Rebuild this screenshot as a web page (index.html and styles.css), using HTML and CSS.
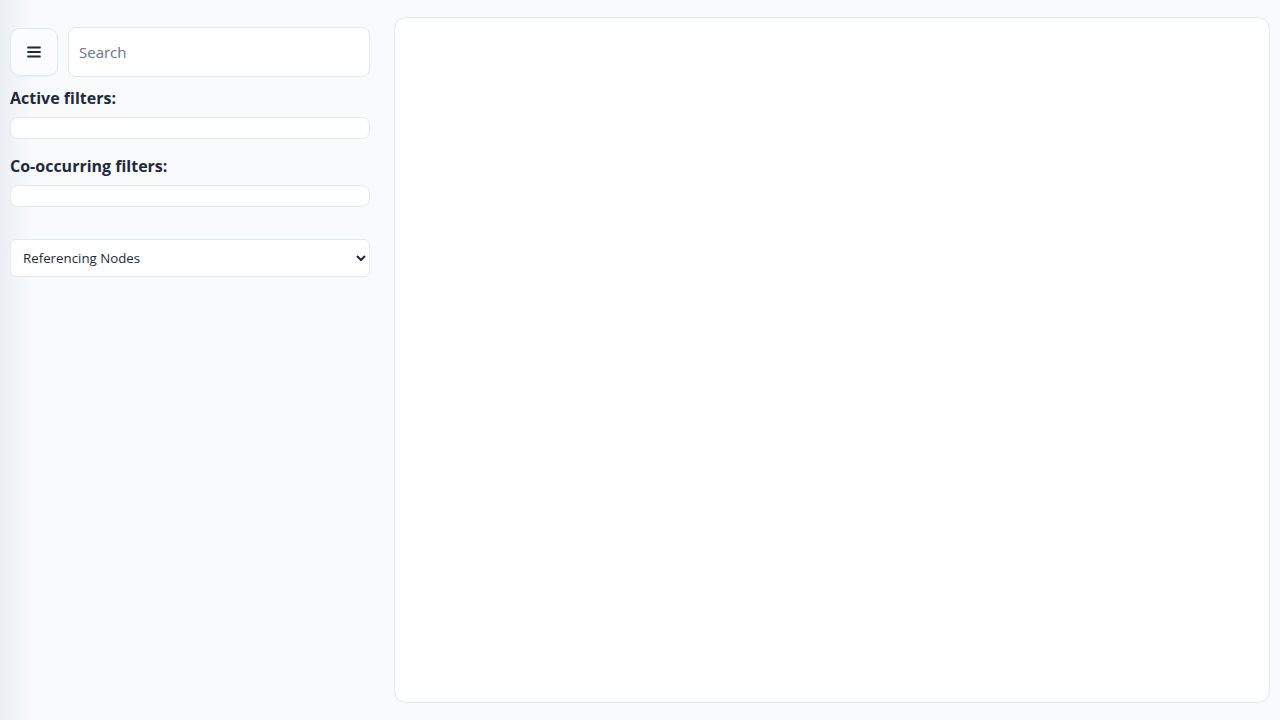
FILE: index.html
```html
<!DOCTYPE html>
<html>
<head>
<meta charset="utf-8">
<link rel="stylesheet" href="styles.css">
</head>
<body>
<div class="app">
  <aside class="sidebar">
    <div class="top-row">
      <button class="menu-btn" aria-label="Menu">
        <svg width="16" height="16" viewBox="0 0 16 16"><path d="M2 3.5h12M2 8h12M2 12.5h12" stroke="#1e293b" stroke-width="1.8" stroke-linecap="round" fill="none"/></svg>
      </button>
      <input class="search" type="text" placeholder="Search">
    </div>
    <h3 class="label">Active filters:</h3>
    <div class="filter-box"></div>
    <h3 class="label label-next">Co-occurring filters:</h3>
    <div class="filter-box"></div>
    <select class="mode">
      <option>Referencing Nodes</option>
    </select>
  </aside>
  <main class="panel"></main>
</div>
</body>
</html>
```
FILE: styles.css
```css
* { box-sizing: border-box; }
html, body { margin: 0; height: 100%; }
body {
  background: linear-gradient(to right, #e9eef3 0px, #f1f4f8 14px, #f8fafc 34px, #f8fafc 100%);
  font-family: "Open Sans", "Noto Sans", sans-serif;
  color: #1e293b;
}
.app {
  display: flex;
  height: 720px;
  padding: 17px 10px 17px 10px;
  gap: 24px;
}
.sidebar {
  width: 360px;
  flex: none;
  display: flex;
  flex-direction: column;
}
.top-row {
  display: flex;
  gap: 10px;
  align-items: center;
  margin-top: 10px;
}
.menu-btn {
  width: 48px;
  height: 48px;
  border: 1px solid #e2e8f0;
  background: #fbfcfd;
  border-radius: 10px;
  display: flex;
  align-items: center;
  justify-content: center;
  padding: 0;
  box-shadow: 0 1px 2px rgba(15,23,42,0.04);
}
.search {
  flex: 1;
  height: 50px;
  border: 1px solid #e2e8f0;
  border-radius: 8px;
  background: #fff;
  padding: 0 10px;
  font-family: "Open Sans", "Noto Sans", sans-serif;
  font-size: 15px;
  color: #1e293b;
  outline: none;
}
.search::placeholder { color: #64748b; }
.label {
  margin: 10px 0 0 0;
  font-size: 16px;
  font-weight: 700;
  line-height: 22px;
  color: #1e293b;
}
.label-next { margin-top: 16px; }
.filter-box {
  height: 22px;
  margin-top: 8px;
  margin-bottom: 0;
  border: 1px solid #e2e8f0;
  border-radius: 8px;
  background: #fff;
}
.mode {
  margin-top: 32px;
  height: 38px;
  border: 1px solid #e2e8f0;
  border-radius: 6px;
  background: #fff;
  font-family: "Open Sans", "Noto Sans", sans-serif;
  font-size: 13.3px;
  color: #1e293b;
  padding: 0 8px;
}
.panel {
  flex: 1;
  background: #fff;
  border: 1px solid #e2e8f0;
  border-radius: 12px;
}
```
